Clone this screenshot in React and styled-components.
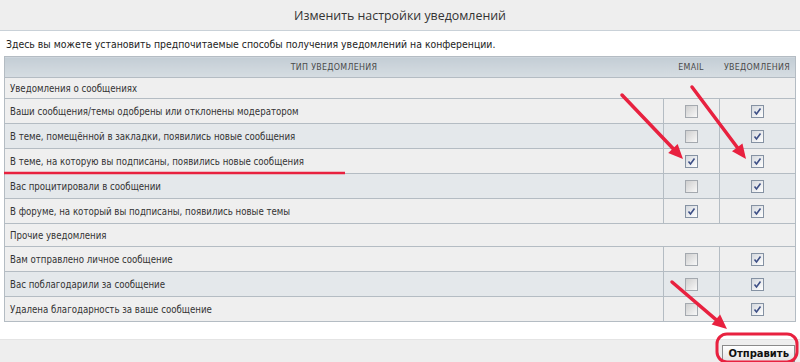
import React from 'react'
import styled, { createGlobalStyle } from 'styled-components'

const GlobalStyle = createGlobalStyle`
  html, body {
    margin: 0;
    padding: 0;
    background: #ffffff;
  }
  body {
    font-family: "DejaVu Sans Condensed", "DejaVu Sans", Verdana, sans-serif;
    color: #333333;
  }
`

const Page = styled.div`
  position: relative;
  width: 800px;
  height: 362px;
  overflow: hidden;
  display: flex;
  flex-direction: column;
  background: #ffffff;
`

const TitleBar = styled.div`
  height: 31px;
  display: flex;
  align-items: center;
  justify-content: center;
  background: #eeeeee;
  border-bottom: 1px solid #c9d1d8;
  font-family: "Open Sans", "DejaVu Sans", sans-serif;
  font-size: 12.4px;
  color: #333333;
`

const Content = styled.div`
  padding: 0 4px;
  height: 304px;
  box-sizing: border-box;
`

const Description = styled.div`
  height: 25px;
  display: flex;
  align-items: center;
  padding-left: 2px;
  font-size: 10.4px;
  color: #222222;
`

const Table = styled.table`
  width: 792px;
  table-layout: fixed;
  border-collapse: collapse;
  border: 1px solid #b4bcc3;
  font-size: 9.6px;
`

const HeadCell = styled.th`
  height: 20px;
  padding: 0 3px;
  font-weight: normal;
  font-size: 8.8px;
  letter-spacing: 0.3px;
  color: #4a4a4a;
  text-align: center;
  background: linear-gradient(to bottom, #c3cdd5, #d6dde2);
  border-bottom: 1px solid #b4bcc3;
  width: ${p => p.$width || 'auto'};
`

const SectionCell = styled.td`
  height: ${p => p.$height}px;
  padding: 0 5px;
  background: #efefef;
  border-bottom: 1px solid #b4bcc3;
  color: #333333;
`

const Row = styled.tr`
  background: ${p => (p.$alt ? '#e4e8eb' : '#efefef')};
`

const Cell = styled.td`
  height: 24px;
  padding: 0 5px;
  border-bottom: 1px solid #b4bcc3;
  color: #333333;
  white-space: nowrap;
`

const CheckCell = styled.td`
  height: 24px;
  padding: 0;
  text-align: center;
  border-bottom: 1px solid #b4bcc3;
  border-left: 1px solid #b4bcc3;
`

const Box = styled.span`
  display: inline-flex;
  align-items: center;
  justify-content: center;
  width: 11px;
  height: 11px;
  vertical-align: middle;
  border: 1px solid ${p => (p.$checked ? '#8592a3' : '#a4a9af')};
  background: ${p => (p.$checked
    ? 'linear-gradient(135deg, #d4d8de, #ffffff)'
    : 'linear-gradient(135deg, #cfcfcf, #f8f8f8)')};
`

const Footer = styled.div`
  flex: 1;
  margin-top: 9px;
  border-top: 1px solid #e4e4e4;
  background: #eeeeee;
  display: flex;
  justify-content: flex-end;
  align-items: flex-start;
  padding: 5px 5px 0 0;
`

const SubmitButton = styled.button`
  height: 17px;
  padding: 0 5px;
  font-family: "DejaVu Sans", Verdana, sans-serif;
  font-size: 10px;
  font-weight: bold;
  color: #111111;
  background: linear-gradient(to bottom, #ffffff, #e4e4e4);
  border: 1px solid #8a8a8a;
  border-radius: 0;
`

const Marks = styled.svg`
  position: absolute;
  left: 0;
  top: 0;
  pointer-events: none;
`

function Checkbox({ checked }) {
  return (
    <Box $checked={checked}>
      {checked && (
        <svg width="9" height="9" viewBox="0 0 9 9">
          <path d="M1.5 4.5 L3.5 7 L7.5 1.5" fill="none" stroke="#3d4f86" strokeWidth="1.6" />
        </svg>
      )}
    </Box>
  )
}

const sections = [
  {
    title: 'Уведомления о сообщениях',
    height: 20,
    rows: [
      { text: 'Ваши сообщения/темы одобрены или отклонены модератором', email: false },
      { text: 'В теме, помещённой в закладки, появились новые сообщения', email: false },
      { text: 'В теме, на которую вы подписаны, появились новые сообщения', email: true },
      { text: 'Вас процитировали в сообщении', email: false },
      { text: 'В форуме, на который вы подписаны, появились новые темы', email: true }
    ]
  },
  {
    title: 'Прочие уведомления',
    height: 22,
    rows: [
      { text: 'Вам отправлено личное сообщение', email: false },
      { text: 'Вас поблагодарили за сообщение', email: false },
      { text: 'Удалена благодарность за ваше сообщение', email: false }
    ]
  }
]

function Arrow({ x1, y1, x2, y2 }) {
  const angle = Math.atan2(y2 - y1, x2 - x1)
  const len = 16
  const spread = 0.42
  const ax = x2 - len * Math.cos(angle - spread)
  const ay = y2 - len * Math.sin(angle - spread)
  const bx = x2 - len * Math.cos(angle + spread)
  const by = y2 - len * Math.sin(angle + spread)
  const sx = x2 - 11 * Math.cos(angle)
  const sy = y2 - 11 * Math.sin(angle)
  return (
    <g>
      <line x1={x1} y1={y1} x2={sx} y2={sy} stroke="#e8213f" strokeWidth="3.5" strokeLinecap="round" />
      <polygon points={`${x2},${y2} ${ax},${ay} ${bx},${by}`} fill="#e8213f" />
    </g>
  )
}

export default function App() {
  return (
    <>
      <GlobalStyle />
      <Page>
        <TitleBar>Изменить настройки уведомлений</TitleBar>
        <Content>
          <Description>
            Здесь вы можете установить предпочитаемые способы получения уведомлений на конференции.
          </Description>
          <Table>
            <thead>
              <tr>
                <HeadCell>ТИП УВЕДОМЛЕНИЯ</HeadCell>
                <HeadCell $width="50px">EMAIL</HeadCell>
                <HeadCell $width="70px">УВЕДОМЛЕНИЯ</HeadCell>
              </tr>
            </thead>
            <tbody>
              {sections.map(section => (
                <React.Fragment key={section.title}>
                  <tr>
                    <SectionCell colSpan={3} $height={section.height}>{section.title}</SectionCell>
                  </tr>
                  {section.rows.map((row, i) => (
                    <Row key={row.text} $alt={i % 2 === 1}>
                      <Cell>{row.text}</Cell>
                      <CheckCell><Checkbox checked={row.email} /></CheckCell>
                      <CheckCell><Checkbox checked /></CheckCell>
                    </Row>
                  ))}
                </React.Fragment>
              ))}
            </tbody>
          </Table>
        </Content>
        <Footer>
          <SubmitButton>Отправить</SubmitButton>
        </Footer>
        <Marks width="800" height="362" viewBox="0 0 800 362">
          <line x1="4" y1="173" x2="345" y2="173" stroke="#e8213f" strokeWidth="2.5" />
          <Arrow x1={622} y1={95} x2={683} y2={159} />
          <Arrow x1={692} y1={87} x2={746} y2={159} />
          <Arrow x1={672} y1={282} x2={727} y2={329} />
          <rect x="717" y="334" width="80" height="28" rx="10" fill="none" stroke="#e8213f" strokeWidth="3" />
        </Marks>
      </Page>
    </>
  )
}
